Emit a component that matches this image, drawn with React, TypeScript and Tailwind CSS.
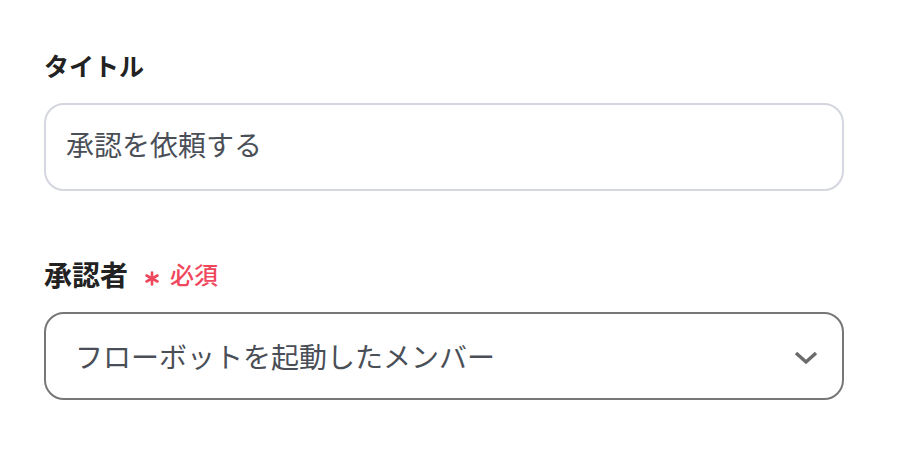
import { useState } from "react";

const font = { fontFamily: '"Noto Sans CJK JP", "Noto Sans", sans-serif' };

export default function App() {
  const [title, setTitle] = useState("承認を依頼する");

  return (
    <div
      style={font}
      className="w-[912px] h-[454px] bg-white pl-[44px] pt-[46px]"
    >
      <div className="w-[800px] flex flex-col">
        {/* タイトル */}
        <label className="text-[25px] leading-[38px] font-bold text-[#222]">
          タイトル
        </label>
        <input
          value={title}
          onChange={(ev) => setTitle(ev.target.value)}
          className="mt-[19px] h-[88px] w-full rounded-[20px] border-2 border-[#d4d7df] pl-[20px] pr-[21px] pb-[6px] text-[28px] text-[#4a4f57] outline-none"
          style={font}
        />

        {/* 承認者 */}
        <div className="mt-[64px] flex items-center gap-[16px]">
          <span className="text-[28px] leading-[38px] font-bold text-[#222]">
            承認者
          </span>
          <span className="flex items-center gap-[10px] text-[24px] font-medium text-[#f0475d]">
            <svg width="16" height="15" viewBox="0 0 16 15" className="mt-[8px]">
              <g stroke="#f0475d" strokeWidth="2.6" strokeLinecap="round">
                <path d="M8 1.5 V13.5" />
                <path d="M2.5 4.5 L13.5 10.5" />
                <path d="M2.5 10.5 L13.5 4.5" />
              </g>
            </svg>
            必須
          </span>
        </div>
        <div className="mt-[19px] h-[88px] w-full rounded-[20px] border-2 border-[#777] pl-[29px] pr-[24px] flex items-center justify-between">
          <span className="text-[28px] text-[#4a4f57]">
            フローボットを起動したメンバー
          </span>
          <svg width="24" height="14" viewBox="0 0 24 14" className="mt-[4px]">
            <path
              d="M2 2 L12 11 L22 2"
              fill="none"
              stroke="#6b6b6b"
              strokeWidth="3.5"
            />
          </svg>
        </div>
      </div>
    </div>
  );
}
